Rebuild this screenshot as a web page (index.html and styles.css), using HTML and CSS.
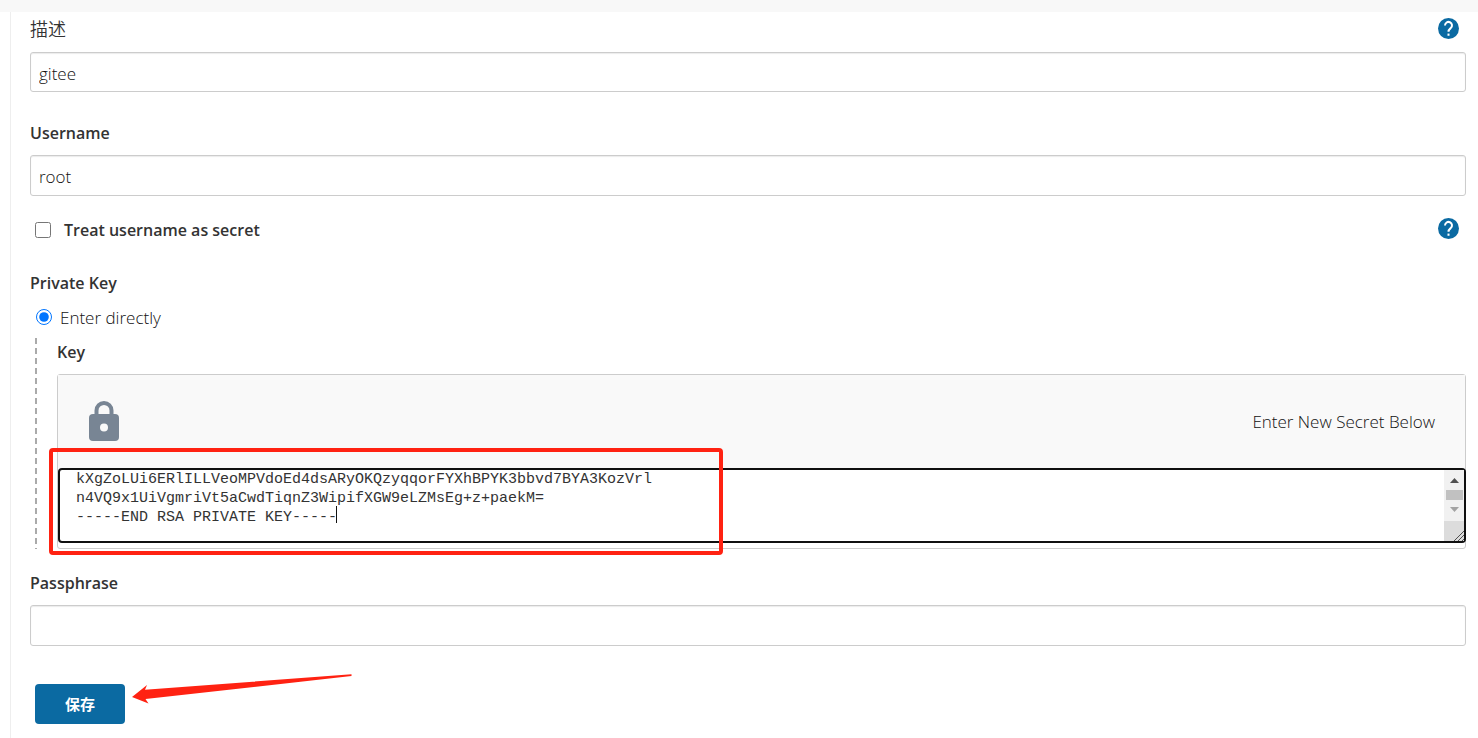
FILE: index.html
```html
<!DOCTYPE html>
<html lang="zh-CN">
<head>
  <meta charset="UTF-8">
  <meta name="viewport" content="width=device-width, initial-scale=1.0">
  <title>Jenkins</title>
  <link rel="stylesheet" href="styles.css">
</head>
<body>
  <form class="panel">
    <div class="field">
      <div class="label-row">
        <label class="zh-label" for="description">描述</label>
        <button type="button" class="help" aria-label="Help">
          <svg viewBox="0 0 24 24"><circle cx="12" cy="12" r="12"/><path d="M8 8.500a4 4 0 1 1 6.600 3c-1.500 1.300-2.600 2-2.600 4.300"/><path d="M12 17.800v2.500"/></svg>
        </button>
      </div>
      <input class="text-input" type="text" id="description" value="gitee">
    </div>

    <div class="field">
      <label for="username">Username</label>
      <input class="text-input" type="text" id="username" value="root">
    </div>

    <div class="check-row">
      <input type="checkbox" id="secret">
      <label for="secret">Treat username as secret</label>
      <button type="button" class="help" aria-label="Help">
        <svg viewBox="0 0 24 24"><circle cx="12" cy="12" r="12"/><path d="M8 8.500a4 4 0 1 1 6.600 3c-1.500 1.300-2.600 2-2.600 4.300"/><path d="M12 17.800v2.500"/></svg>
      </button>
    </div>

    <div class="group-title">Private Key</div>
    <div class="radio-row">
      <input type="radio" id="direct" name="source" checked>
      <label for="direct">Enter directly</label>
    </div>

    <div class="key-group">
      <svg class="dashes"><line x1="1" y1="0" x2="1" y2="100%"/></svg>
      <label for="key">Key</label>
      <div class="secret">
        <div class="secret-header">
          <svg class="lock" viewBox="0 0 30 40">
            <path d="M7.500 15V9.500a7.500 7.500 0 0 1 15 0V15"/>
            <rect y="13" width="30" height="27" rx="4"/>
            <circle cx="15" cy="26.500" r="4"/>
          </svg>
          <span>Enter New Secret Below</span>
        </div>
        <div class="key-box">
          <textarea id="key" spellcheck="false" wrap="off">kXgZoLUi6ERlILLVeoMPVdoEd4dsARyOKQzyqqorFYXhBPYK3bbvd7BYA3KozVrl
n4VQ9x1UiVgmriVt5aCwdTiqnZ3WipifXGW9eLZMsEg+z+paekM=
-----END RSA PRIVATE KEY-----</textarea>
          <span class="caret"></span>
          <svg class="scrollbar" viewBox="0 0 20 71">
            <rect width="20" height="51" fill="#f1f1f1"/>
            <rect x="2" y="20" width="17" height="10" fill="#c1c1c1"/>
            <path d="M6 13l4.500-5 4.500 5z" fill="#505050"/>
            <path d="M6 37l4.500 5 4.500-5z" fill="#a3a3a3"/>
            <rect y="51" width="20" height="20" fill="#dcdcdc"/>
            <path d="M10 71l10-10M14 71l6-6M18 71l2-2" stroke="#505050"/>
          </svg>
        </div>
      </div>
      <div class="mark"></div>
    </div>

    <div class="field">
      <label for="passphrase">Passphrase</label>
      <input class="text-input" type="password" id="passphrase">
    </div>

    <div class="actions">
      <button type="submit" class="save">保存</button>
      <svg class="arrow" viewBox="0 0 220 30"><path d="M0 23L15 11 13 15.700 219.500 .3v1.700L13.500 25l3 4.500z"/></svg>
    </div>
  </form>
</body>
</html>
```

FILE: styles.css
```css
* {
  box-sizing: border-box;
}

body {
  margin: 0;
  border-top: 12px solid #f8f8f8;
  background: #fff;
  color: #333;
  font-family: "Segoe UI", "Open Sans", "Noto Sans CJK SC", sans-serif;
  font-size: 16px;
  line-height: 24px;
}

.panel {
  min-height: calc(100vh - 12px);
  margin-left: 10px;
  padding: 5px 12px 0 19px;
  border-left: 1px solid #eee;
}

label,
.group-title {
  display: block;
  font-weight: 600;
}

.field {
  margin-bottom: 29px;
}

.label-row,
.check-row,
.radio-row {
  display: flex;
  align-items: center;
  height: 24px;
}

.label-row {
  justify-content: space-between;
  margin-bottom: 11px;
}

.label-row .zh-label {
  font-size: 18px;
  font-weight: 350;
}

.help {
  width: 21px;
  height: 21px;
  margin: 0 7px 2px 0;
  padding: 0;
  border: 0;
  background: none;
  cursor: pointer;
}

.help svg {
  display: block;
  fill: none;
  stroke: #fff;
  stroke-width: 2.3;
}

.help circle {
  fill: #0b6aa2;
  stroke: none;
}

.text-input {
  display: block;
  width: 100%;
  height: 41px;
  margin-top: 10px;
  padding: 4px 8px 2px;
  border: 1px solid #ccc;
  border-radius: 3px;
  box-shadow: inset 0 1px 1px rgba(0, 0, 0, 0.08);
  color: #111;
  font-family: inherit;
  font-size: 17px;
  font-weight: 300;
}

.label-row + .text-input {
  height: 40px;
}

.check-row {
  margin: -7px 0 29px;
}

.check-row input {
  width: 16px;
  height: 16px;
  margin: 0 13px 0 5px;
}

.check-row .help {
  margin: 0 7px 3px auto;
}

.radio-row {
  margin: 11px 0 8px;
}

.radio-row input {
  width: 16px;
  height: 16px;
  margin: 0 8px 2px 6px;
}

.radio-row label,
.secret-header span {
  color: #111;
  font-size: 17px;
  font-weight: 300;
}

.key-group {
  position: relative;
  margin-bottom: 22px;
  padding: 2px 0 0 27px;
}

.dashes {
  position: absolute;
  top: 0;
  left: 5px;
  width: 2px;
  height: 100%;
}

.dashes line {
  stroke: #aaa;
  stroke-width: 2;
  stroke-dasharray: 6 4;
}

.secret {
  margin-top: 10px;
  padding-bottom: 5px;
  border: 1px solid #ccc;
  border-radius: 3px;
}

.secret-header {
  display: flex;
  align-items: center;
  justify-content: space-between;
  height: 93px;
  padding: 0 30px 0 31px;
  background: #f9f9f9;
}

.lock {
  width: 30px;
  height: 40px;
  margin-bottom: 2px;
  fill: #788594;
}

.lock path {
  fill: none;
  stroke: #788594;
  stroke-width: 4;
}

.lock circle {
  fill: #f9f9f9;
}

.key-box {
  position: relative;
  margin-right: -1px;
}

textarea {
  display: block;
  width: 100%;
  height: 75px;
  padding: 0 16px;
  border: 2px solid #101010;
  border-radius: 4px;
  outline: 0;
  overflow: hidden;
  resize: none;
  background: #fff;
  color: #333;
  font-family: "Liberation Mono", monospace;
  font-size: 15px;
  line-height: 19px;
}

.caret {
  position: absolute;
  top: 38px;
  left: 278px;
  width: 1px;
  height: 17px;
  background: #111;
}

.scrollbar {
  position: absolute;
  top: 2px;
  right: 2px;
  width: 20px;
  height: 71px;
}

/* red annotation frame around the key */
.mark {
  position: absolute;
  top: 110px;
  left: 19px;
  width: 674px;
  height: 107px;
  border: 4px solid #ff2212;
  border-radius: 4px;
  pointer-events: none;
}

.actions {
  position: relative;
  margin: 38px 0 0 5px;
}

.save {
  width: 90px;
  height: 40px;
  padding: 0 0 2px;
  border: 0;
  border-radius: 4px;
  background: #0b6aa2;
  color: #fff;
  font-family: "Noto Sans CJK SC", sans-serif;
  font-size: 15px;
  font-weight: 700;
  cursor: pointer;
}

.arrow {
  position: absolute;
  top: -10px;
  left: 97px;
  width: 220px;
  height: 30px;
  fill: #ff2212;
}
```
